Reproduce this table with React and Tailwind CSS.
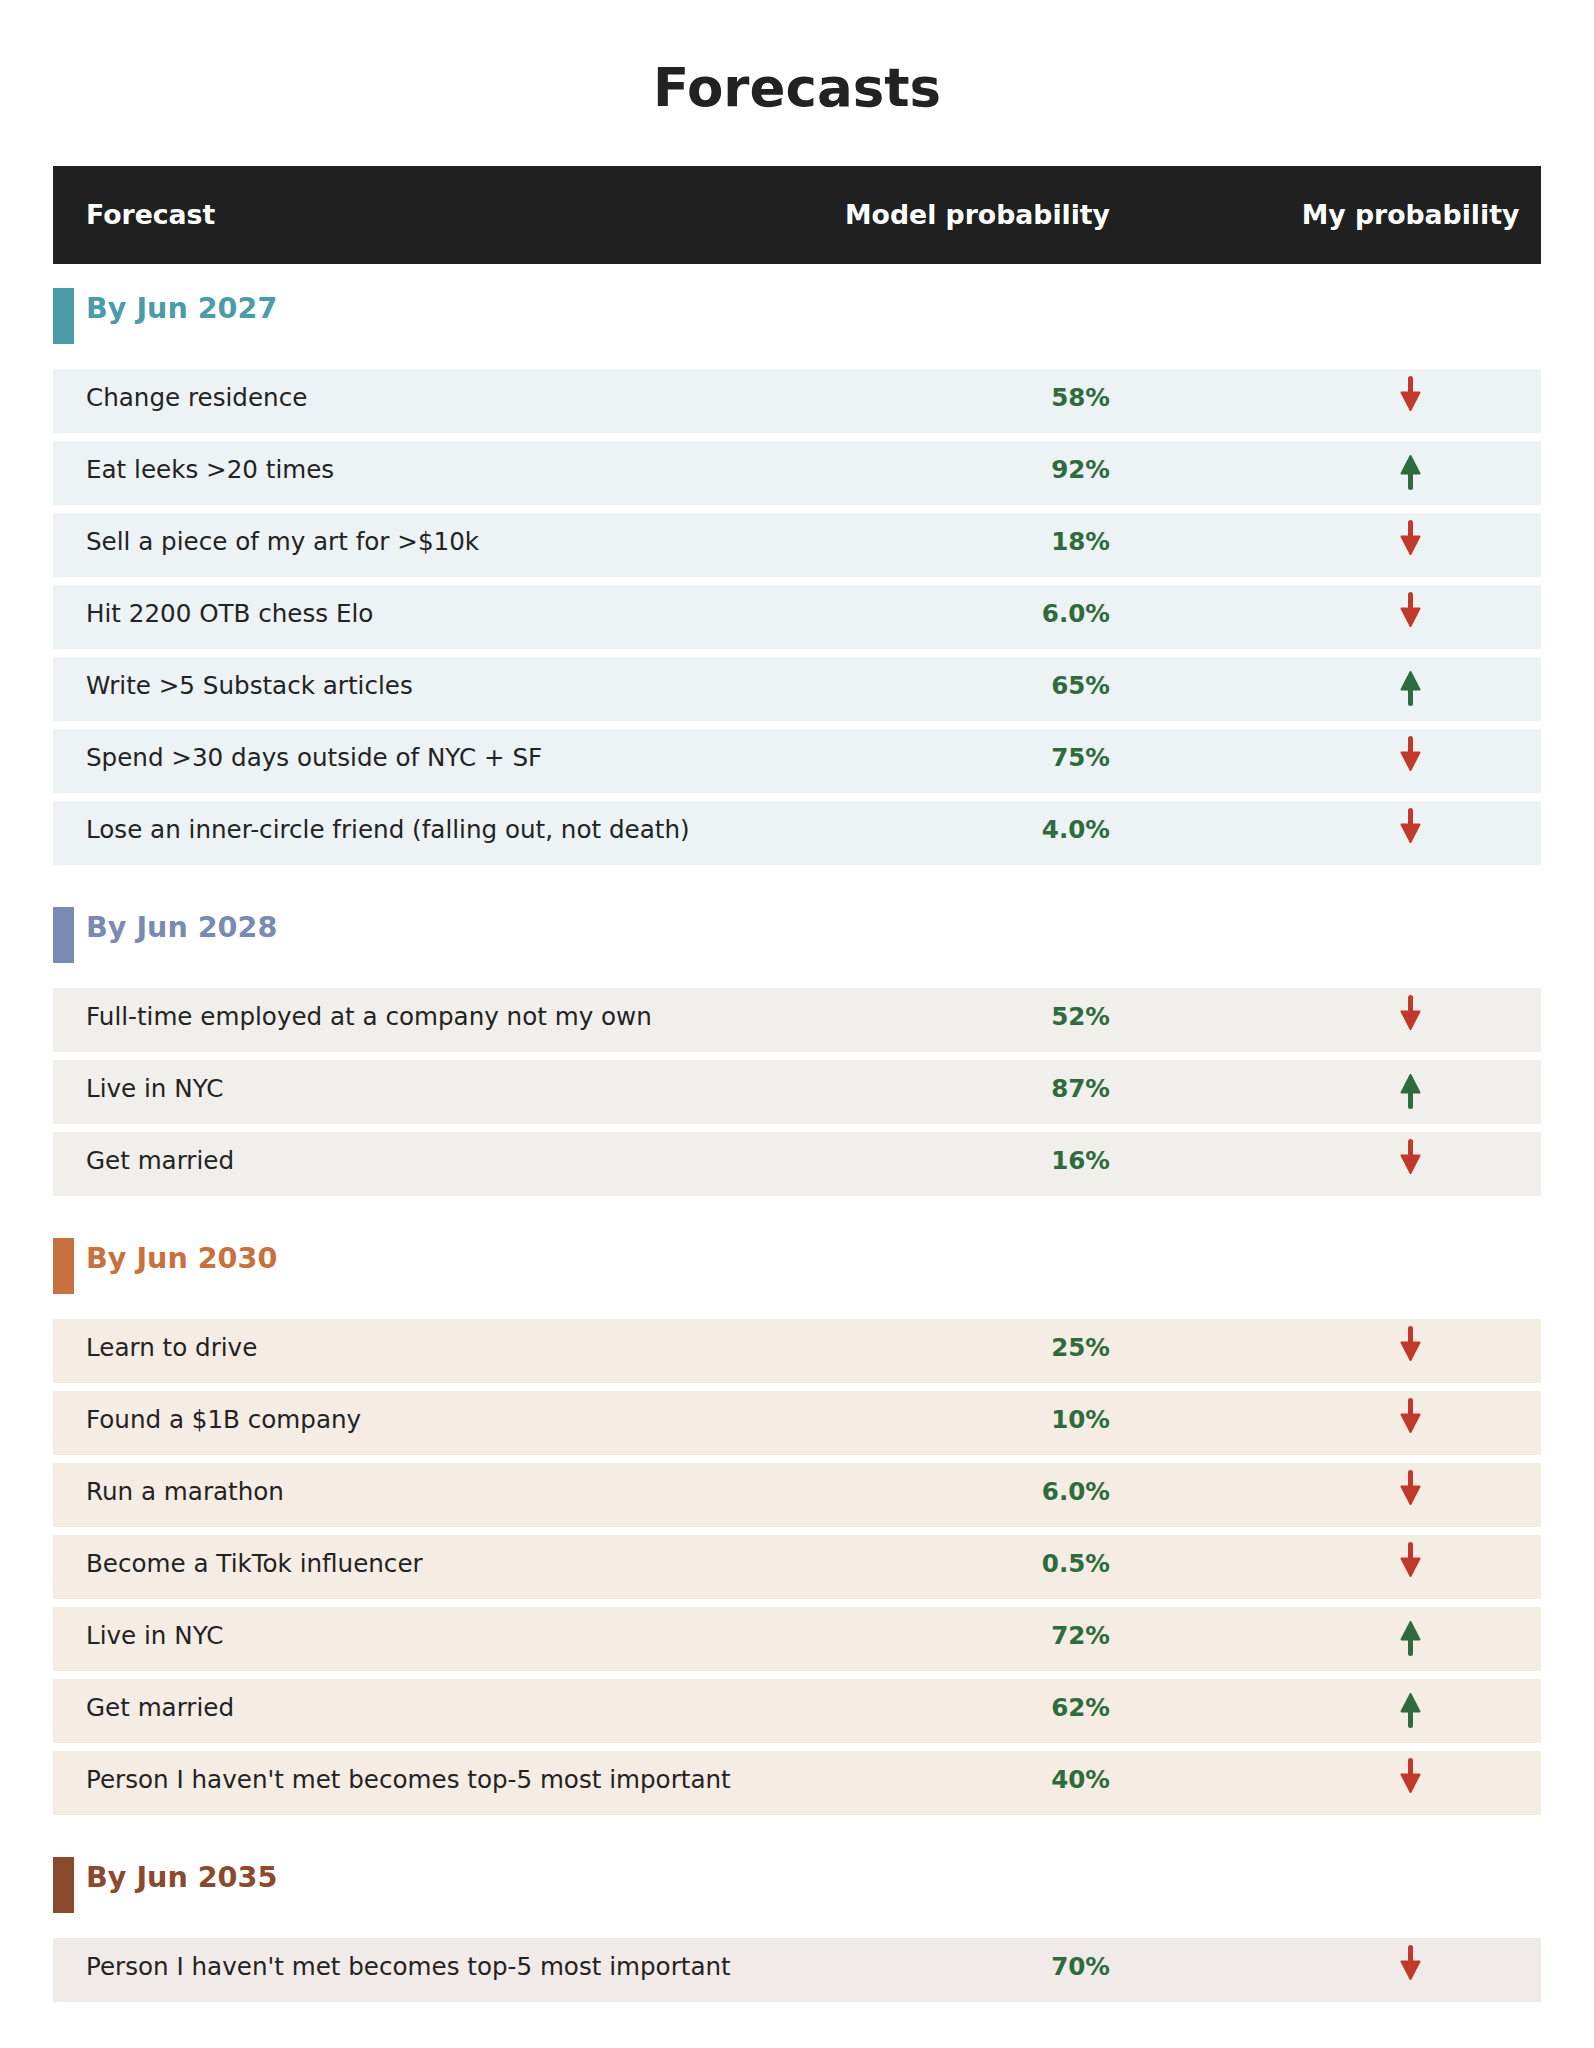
import React from "react";

const SECTIONS = [
  {
    title: "By Jun 2027",
    bar: "bg-[#4c9ba8]",
    text: "text-[#4c9ba8]",
    row: "bg-[#edf2f4]",
    items: [
      { label: "Change residence", model: "58%", dir: "down" },
      { label: "Eat leeks >20 times", model: "92%", dir: "up" },
      { label: "Sell a piece of my art for >$10k", model: "18%", dir: "down" },
      { label: "Hit 2200 OTB chess Elo", model: "6.0%", dir: "down" },
      { label: "Write >5 Substack articles", model: "65%", dir: "up" },
      { label: "Spend >30 days outside of NYC + SF", model: "75%", dir: "down" },
      {
        label: "Lose an inner-circle friend (falling out, not death)",
        model: "4.0%",
        dir: "down",
      },
    ],
  },
  {
    title: "By Jun 2028",
    bar: "bg-[#7a8bb3]",
    text: "text-[#7a8bb3]",
    row: "bg-[#f0efeb]",
    items: [
      { label: "Full-time employed at a company not my own", model: "52%", dir: "down" },
      { label: "Live in NYC", model: "87%", dir: "up" },
      { label: "Get married", model: "16%", dir: "down" },
    ],
  },
  {
    title: "By Jun 2030",
    bar: "bg-[#c8703e]",
    text: "text-[#c8703e]",
    row: "bg-[#f5ede3]",
    items: [
      { label: "Learn to drive", model: "25%", dir: "down" },
      { label: "Found a $1B company", model: "10%", dir: "down" },
      { label: "Run a marathon", model: "6.0%", dir: "down" },
      { label: "Become a TikTok influencer", model: "0.5%", dir: "down" },
      { label: "Live in NYC", model: "72%", dir: "up" },
      { label: "Get married", model: "62%", dir: "up" },
      {
        label: "Person I haven't met becomes top-5 most important",
        model: "40%",
        dir: "down",
      },
    ],
  },
  {
    title: "By Jun 2035",
    bar: "bg-[#8a4a2e]",
    text: "text-[#8a4a2e]",
    row: "bg-[#f0ebe8]",
    items: [
      {
        label: "Person I haven't met becomes top-5 most important",
        model: "70%",
        dir: "down",
      },
    ],
  },
];

// arrow drawn as a rounded shaft plus a filled head
function Arrow({ dir }) {
  const up = dir === "up";
  const color = up ? "#2e6b3e" : "#c0392b";
  return (
    <svg width="21" height="36" viewBox="0 0 21 36" className={up ? "block" : "block rotate-180"}>
      <line x1="10.5" y1="17" x2="10.5" y2="33.5" stroke={color} strokeWidth="5" strokeLinecap="round" />
      <polygon
        points="10.5,2 19.5,19.5 1.5,19.5"
        fill={color}
        stroke={color}
        strokeWidth="2"
        strokeLinejoin="round"
      />
    </svg>
  );
}

function Row({ item, bg }) {
  return (
    <div className={`flex h-[64px] ${bg}`}>
      <div className="flex-1 min-w-0 pl-[33px] pt-[14.5px] text-[24.6px] leading-[28px] text-[#232323]">
        {item.label}
      </div>
      <div className="w-[280px] pt-[14.5px] text-right text-[24.6px] leading-[28px] font-bold text-[#2e6b3e]">
        {item.model}
      </div>
      <div
        className={`ml-[170px] w-[261px] flex justify-center ${
          item.dir === "up" ? "pt-[13px]" : "pt-[7px]"
        }`}
      >
        <Arrow dir={item.dir} />
      </div>
    </div>
  );
}

function Section({ section, first }) {
  return (
    <div className={first ? "mt-[24px]" : "mt-[42px]"}>
      <div className="flex h-[56px]">
        <div className={`w-[21px] h-full ${section.bar}`} />
        <div className={`ml-[12px] mt-[3.5px] text-[28.6px] leading-[33px] font-bold ${section.text}`}>
          {section.title}
        </div>
      </div>
      <div className="mt-[25px] flex flex-col gap-[8px]">
        {section.items.map((item, i) => (
          <Row key={i} item={item} bg={section.row} />
        ))}
      </div>
    </div>
  );
}

export default function App() {
  return (
    <div className="min-h-screen bg-white font-['DejaVu_Sans',sans-serif] px-[53px] pb-[40px]">
      <h1 className="pt-[57px] text-center text-[53px] leading-[62px] font-bold text-[#222222]">
        Forecasts
      </h1>
      <div className="mt-[47px] flex h-[98px] items-center bg-[#202020] text-[26.7px] font-bold text-white">
        <div className="flex-1 pl-[33px]">Forecast</div>
        <div className="w-[280px] text-right whitespace-nowrap">Model probability</div>
        <div className="ml-[170px] w-[261px] text-center whitespace-nowrap">My probability</div>
      </div>
      {SECTIONS.map((s, i) => (
        <Section key={s.title} section={s} first={i === 0} />
      ))}
    </div>
  );
}
